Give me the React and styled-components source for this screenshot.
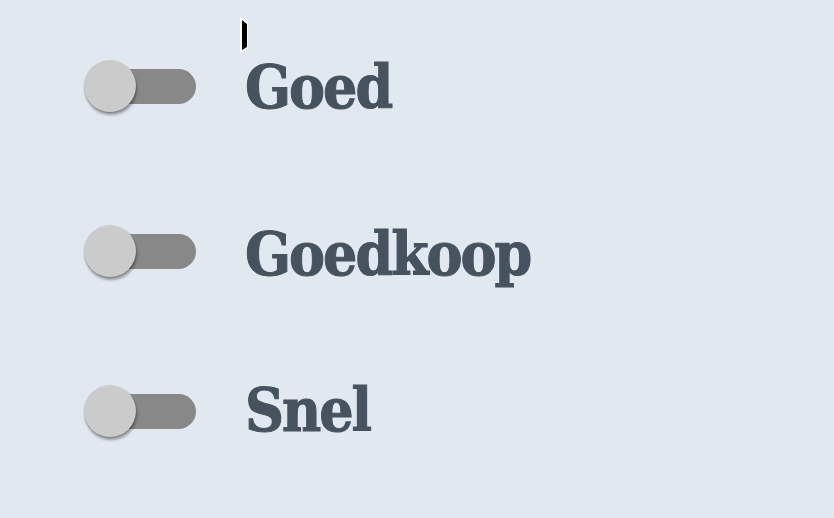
import React from "react";
import styled, { createGlobalStyle } from "styled-components";

const Global = createGlobalStyle`
  html, body {
    margin: 0;
    padding: 0;
    background: #e2e8f0;
  }
  body {
    width: 834px;
    height: 518px;
    overflow: hidden;
    position: relative;
  }
`;

const Page = styled.div`
  display: flex;
  flex-direction: column;
  padding: 60px 0 0 84px;
`;

const Row = styled.label`
  display: flex;
  align-items: center;
  gap: 49px;
  height: 52px;
  margin-top: ${(p) => p.$offset || 0}px;
  cursor: pointer;
`;

const Switch = styled.span`
  position: relative;
  display: block;
  width: 112px;
  height: 52px;
  flex: none;
`;

const Track = styled.span`
  position: absolute;
  left: 10px;
  right: 0;
  top: 9px;
  height: 35px;
  border-radius: 18px;
  background: #888888;
`;

const Thumb = styled.span`
  position: absolute;
  left: 0;
  top: 0;
  width: 52px;
  height: 52px;
  border-radius: 50%;
  background: #cbcbcb;
  box-shadow: 1px 3px 3px rgba(0, 0, 0, 0.35), 0 1px 1px rgba(0, 0, 0, 0.15);
`;

const Label = styled.span`
  font-family: "DejaVu Serif Condensed", "DejaVu Serif", serif;
  font-weight: 700;
  font-size: 60px;
  line-height: 1;
  color: #46535f;
  letter-spacing: -2px;
  -webkit-text-stroke: 1px #46535f;
  margin-top: ${(p) => p.$shift || 0}px;
`;

const Caret = styled.svg`
  position: absolute;
  left: 236px;
  top: 16px;
`;

const options = [
  { name: "Goed", offset: 0, shift: 2 },
  { name: "Goedkoop", offset: 113, shift: 5 },
  { name: "Snel", offset: 108, shift: -2 },
];

export default function App() {
  return (
    <>
      <Global />
      <Page>
        {options.map((o) => (
          <Row key={o.name} $offset={o.offset}>
            <Switch>
              <Track />
              <Thumb />
            </Switch>
            <Label $shift={o.shift}>{o.name}</Label>
          </Row>
        ))}
      </Page>
      <Caret width="14" height="38" viewBox="0 0 14 38">
        <polygon points="4,1 12,6 12,32 4,37" fill="#ffffff" />
        <polygon points="6,4 11,8 11,31 6,34" fill="#000000" />
      </Caret>
    </>
  );
}
